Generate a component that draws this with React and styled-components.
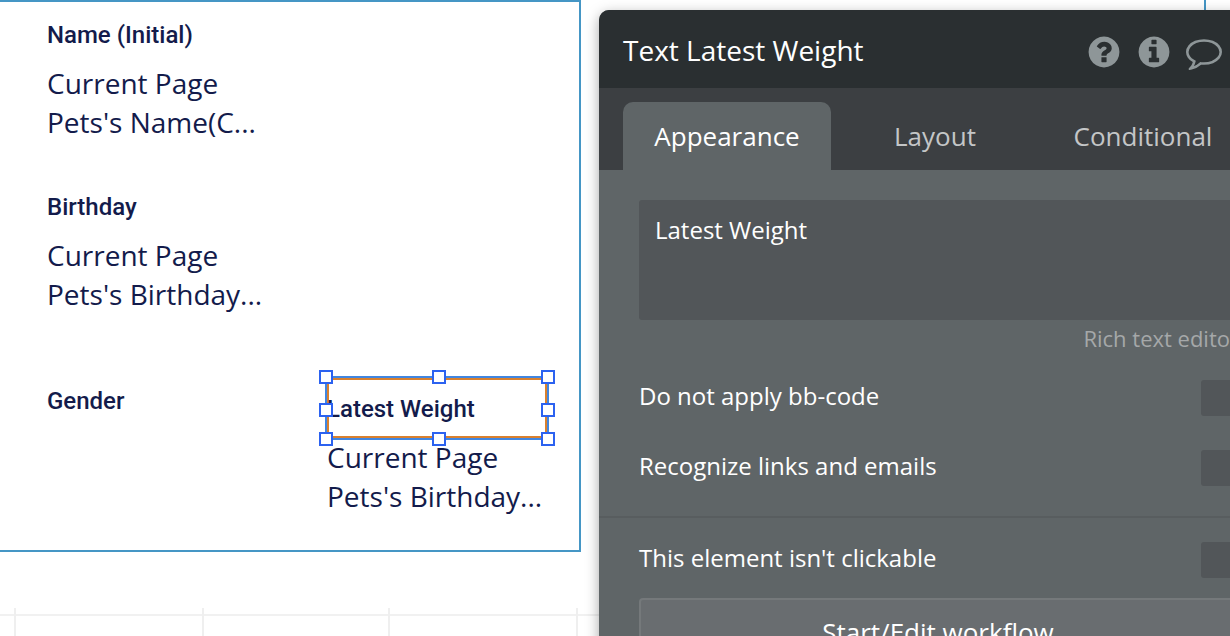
import React from "react";
import styled, { createGlobalStyle } from "styled-components";

const GlobalStyle = createGlobalStyle`
  * { box-sizing: border-box; }
  body { margin: 0; background: #fff; }
  button, input, textarea { font: inherit; color: inherit; }
`;

const Editor = styled.div`
  display: grid;
  grid-template-columns: minmax(0, 599fr) minmax(0, 631fr);
  height: 100vh;
  overflow: hidden;
  font-family: "Open Sans", sans-serif;
`;

const Canvas = styled.main`
  display: flex;
  flex-direction: column;
  min-width: 0;
  color: #131b4b;
`;

const PetGroup = styled.section`
  display: grid;
  grid-template-columns: 280px 220px;
  grid-template-rows: 172px 204px 172px;
  margin-right: 18px;
  padding-left: 47px;
  border: 2px solid #4596c5;
  border-left: 0;
`;

const Field = styled.div`
  grid-column: ${(p) => p.$column || 1};
  padding-top: ${(p) => p.$top}px;
`;

const FieldLabel = styled.h2`
  margin: 0;
  font: 500 24px/28px Roboto, sans-serif;
`;

const FieldValue = styled.p`
  width: 220px;
  margin: 0;
  padding-top: ${(p) => p.$gap || 0}px;
  font-size: 28px;
  line-height: 39px;
`;

const Selection = styled.div`
  position: relative;
  display: flex;
  align-items: center;
  height: 60px;
  padding-top: 2px;
  outline: 2px solid #4186e0;
  box-shadow: inset 0 0 0 2px #d9802e;
`;

const Handle = styled.i`
  position: absolute;
  left: ${(p) => p.$x};
  top: ${(p) => p.$y};
  width: 14px;
  height: 14px;
  margin: -8px;
  background: #fff;
  border: 2px solid #2c62f0;
`;

const GridLines = styled.div`
  display: grid;
  grid-template-columns: 14px 188px 186px 188px 1fr;
  flex: 1;
  margin-top: 56px;
`;

const GridCell = styled.div`
  padding-top: 6px;
  border-left: ${(p) => (p.$first ? 0 : 2)}px solid #efefef;
  &::before {
    content: "";
    display: block;
    height: 2px;
    background: #f1f1f1;
  }
`;

const PanelColumn = styled.aside`
  display: flex;
  flex-direction: column;
  min-width: 0;
`;

const GroupEdge = styled.div`
  flex: none;
  height: 10px;
  margin-right: 24px;
  border-right: 2px solid #4596c5;
`;

const Panel = styled.section`
  flex: 1;
  margin-right: -41px;
  border-top-left-radius: 10px;
  background: #5f6567;
  color: #fff;
  box-shadow: 0 4px 14px rgba(0, 0, 0, 0.35);
`;

const PanelHeader = styled.header`
  display: flex;
  align-items: center;
  justify-content: space-between;
  height: 78px;
  padding: 6px 49px 0 24px;
  border-top-left-radius: 10px;
  background: #2a2f31;
`;

const PanelTitle = styled.h1`
  margin: 0;
  font-size: 28px;
  font-weight: 400;
  line-height: 42px;
  padding-bottom: 4px;
`;

const Actions = styled.div`
  display: flex;
  gap: 14px;
`;

const IconButton = styled.button`
  display: block;
  width: 36px;
  height: 36px;
  padding: 0;
  border: 0;
  background: none;
  color: #8e9698;
  svg { display: block; fill: currentColor; }
`;

const Tabs = styled.div`
  display: grid;
  grid-template-columns: repeat(3, 1fr);
  height: 82px;
  padding: 14px 24px 0;
  background: #3c3f42;
`;

const Tab = styled.button`
  padding: 0;
  border: 0;
  border-radius: 10px 10px 0 0;
  background: ${(p) => (p.$active ? "#5f6567" : "none")};
  color: ${(p) => (p.$active ? "#fff" : "#c4c6c7")};
  font-size: 26px;
  line-height: 36px;
`;

const PanelBody = styled.div`
  padding: 30px 34px 0 40px;
  font-size: 24px;
  line-height: 36px;
`;

const TextBox = styled.textarea`
  display: block;
  width: 100%;
  height: 120px;
  padding: 12px 16px;
  border: 0;
  border-radius: 3px;
  background: #525659;
  resize: none;
  outline: 0;
`;

const EditorLink = styled.a`
  display: block;
  margin-right: -2px;
  padding: 4px 0 2px;
  color: #a5a8a9;
  font-size: 22px;
  line-height: 28px;
  text-align: right;
  text-decoration: none;
`;

const OptionRow = styled.label`
  display: flex;
  justify-content: space-between;
  height: 36px;
  margin-top: ${(p) => p.$gap}px;
  line-height: 32px;
`;

const CheckBox = styled.input`
  appearance: none;
  width: 36px;
  height: 36px;
  margin: 0;
  border-radius: 3px;
  background: #525659;
`;

const Divider = styled.hr`
  height: 2px;
  margin: 30px -34px 0 -40px;
  border: 0;
  background: #585d5f;
`;

const WorkflowButton = styled.button`
  display: block;
  width: 100%;
  height: 68px;
  margin-top: 20px;
  padding: 0;
  border: 2px solid #75797b;
  border-radius: 4px;
  background: #696d70;
  font-size: 26px;
`;

const DISC =
  "m640 0q0 209-103 385.5t-279.5 279.5-385.5 103-385.5-103-279.5-279.5-103-385.5 103-385.5 279.5-279.5 385.5-103 385.5 103 279.5 279.5 103 385.5z";

const ICONS = {
  Help:
    "M1024 1376v-192q0-14-9-23t-23-9h-192q-14 0-23 9t-9 23v192q0 14 9 23t23 9h192q14 0 23-9t9-23zm256-672q0-88-55.5-163t-138.5-116-170-41q-243 0-371 213-15 24 8 42l132 100q7 6 19 6 16 0 25-12 53-68 86-92 34-24 86-24 48 0 85.5 26t37.5 59q0 38-20 61t-68 45q-63 28-115.5 86.5t-52.5 125.5v36q0 14 9 23t23 9h192q14 0 23-9t9-23q0-19 21.5-49.5t54.5-49.5q32-18 49-28.5t46-35 44.5-48 28-60.5 12.5-81zM1024 896" +
    DISC,
  Info:
    "M1152 1376v-160q0-14-9-23t-23-9h-96v-512q0-14-9-23t-23-9h-320q-14 0-23 9t-9 23v160q0 14 9 23t23 9h96v320h-96q-14 0-23 9t-9 23v160q0 14 9 23t23 9h448q14 0 23-9t9-23zm-128-896v-160q0-14-9-23t-23-9h-192q-14 0-23 9t-9 23v160q0 14 9 23t23 9h192q14 0 23-9t9-23zM1024 896" +
    DISC,
  Comment:
    "M896 384q-204 0-381.5 69.5t-282 187.5-104.5 255q0 112 71.5 213.5t201.5 175.5l87 50-27 96q-24 91-70 172 152-63 275-171l43-38 57 6q69 8 130 8 204 0 381.5-69.5t282-187.5 104.5-255-104.5-255-282-187.5-381.5-69.5zm896 512q0 174-120 321.5t-326 233-450 85.5q-70 0-145-8-198 175-460 242-49 14-114 22h-5q-15 0-27-10.5t-16-27.5v-1q-3-4-.5-12t2-10 4.5-9.5l6-9 7-8.5 8-9q7-8 31-34.5t34.5-38 31-39.5 32.5-51 27-59 26-76q-157-89-247.5-220t-90.5-281q0-174 120-321.5t326-233 450-85.5 450 85.5 326 233 120 321.5z",
};

const START = "0%";
const MIDDLE = "calc(50% + 3px)";
const END = "calc(100% + 2px)";

const HANDLES = [
  [START, START], [MIDDLE, START], [END, START],
  [START, MIDDLE], [END, MIDDLE],
  [START, END], [MIDDLE, END], [END, END],
];

function Option({ label, gap }) {
  return (
    <OptionRow $gap={gap}>
      {label}
      <CheckBox type="checkbox" />
    </OptionRow>
  );
}

export default function App() {
  return (
    <>
      <GlobalStyle />
      <Editor>
        <Canvas>
          <PetGroup>
            <Field $top={19}>
              <FieldLabel>Name (Initial)</FieldLabel>
              <FieldValue $gap={15}>Current Page Pets's Name(C...</FieldValue>
            </Field>
            <Field $top={19}>
              <FieldLabel>Birthday</FieldLabel>
              <FieldValue $gap={15}>Current Page Pets's Birthday...</FieldValue>
            </Field>
            <Field $top={9}>
              <FieldLabel>Gender</FieldLabel>
            </Field>
            <Field $top={0} $column={2}>
              <Selection>
                <FieldLabel>Latest Weight</FieldLabel>
                {HANDLES.map(([x, y]) => (
                  <Handle key={x + y} $x={x} $y={y} />
                ))}
              </Selection>
              <FieldValue>Current Page Pets's Birthday...</FieldValue>
            </Field>
          </PetGroup>
          <GridLines>
            <GridCell $first />
            <GridCell />
            <GridCell />
            <GridCell />
            <GridCell />
          </GridLines>
        </Canvas>
        <PanelColumn>
          <GroupEdge />
          <Panel>
            <PanelHeader>
              <PanelTitle>Text Latest Weight</PanelTitle>
              <Actions>
                {Object.entries(ICONS).map(([name, path]) => (
                  <IconButton key={name} type="button" aria-label={name}>
                    <svg viewBox="0 0 1792 1792" width="36" height="36">
                      <path d={path} />
                    </svg>
                  </IconButton>
                ))}
              </Actions>
            </PanelHeader>
            <Tabs role="tablist">
              <Tab role="tab" aria-selected="true" $active>Appearance</Tab>
              <Tab role="tab" aria-selected="false">Layout</Tab>
              <Tab role="tab" aria-selected="false">Conditional</Tab>
            </Tabs>
            <PanelBody>
              <TextBox aria-label="Text content" defaultValue="Latest Weight" />
              <EditorLink href="#editor">Rich text editor</EditorLink>
              <Option label="Do not apply bb-code" gap={26} />
              <Option label="Recognize links and emails" gap={34} />
              <Divider />
              <Option label="This element isn't clickable" gap={24} />
              <WorkflowButton type="button">Start/Edit workflow</WorkflowButton>
            </PanelBody>
          </Panel>
        </PanelColumn>
      </Editor>
    </>
  );
}
